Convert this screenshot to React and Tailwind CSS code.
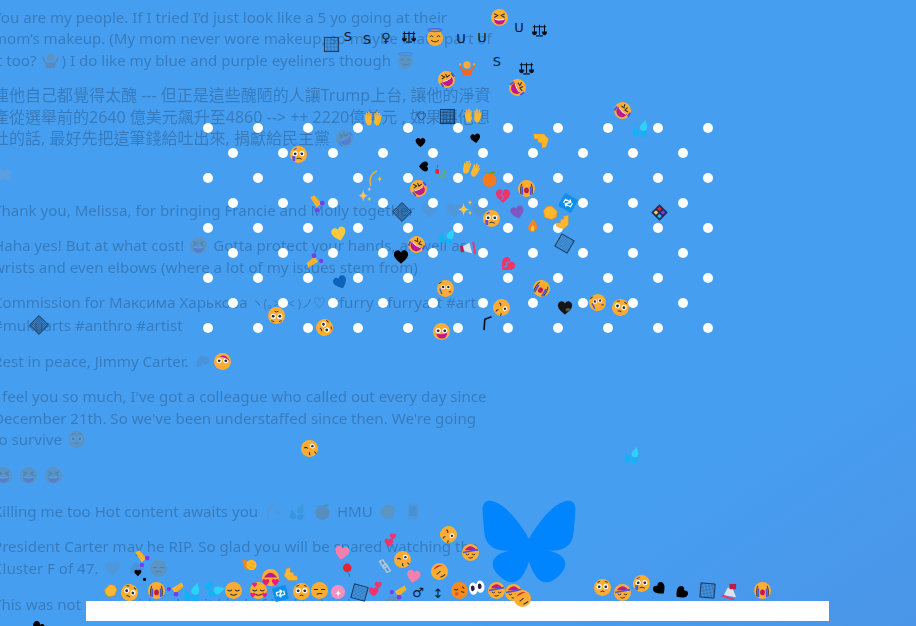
import React from 'react';

const FACE = '#FFAC33';
const DARK = '#292F33';
const HEART = 'M18 33C8 25 2 19 2 12C2 6 7 3 11 3C14 3 16 5 18 8C20 5 22 3 25 3C29 3 34 6 34 12C34 19 28 25 18 33Z';
const STAR = 'M14 4C15 13 18 17 26 18C18 19 15 23 14 32C13 23 10 19 2 18C10 17 13 13 14 4Z';
const DROP = 'M8 0C10 6 15 10 15 15A7 7 0 0 1 1 15C1 10 6 6 8 0Z';

const Base = ({ children }) => (
  <>
    <circle cx="18" cy="18" r="18" fill={FACE} />
    {children}
  </>
);

const BigEyes = () => (
  <>
    <circle cx="11" cy="16" r="5.5" fill="#fff" />
    <circle cx="25" cy="16" r="5.5" fill="#fff" />
    <circle cx="11" cy="16.5" r="3" fill={DARK} />
    <circle cx="25" cy="16.5" r="3" fill={DARK} />
  </>
);

const Closed = () => (
  <g fill="none" stroke={DARK} strokeWidth="2.2" strokeLinecap="round">
    <path d="M6 17Q10 21 14 17" />
    <path d="M22 17Q26 21 30 17" />
    <path d="M12 26Q18 30 24 26" />
  </g>
);

const Grid = ({ dense }) => (
  <>
    <defs>
      <pattern id={dense ? 'gridDense' : 'gridFine'} width="3" height="3" patternUnits="userSpaceOnUse">
        <path d="M0 0H3M0 0V3" stroke="#17375a" strokeWidth={dense ? 1.5 : 0.7} />
      </pattern>
    </defs>
    <rect x="3" y="3" width="30" height="30" fill={`url(#${dense ? 'gridDense' : 'gridFine'})`} stroke="#17375a" strokeWidth="2" />
  </>
);

const Palm = () => (
  <path d="M3 23L1 11Q2 9 3.500 11L4.500 15L4 6Q5.500 4 7 6L8 14L8.500 4Q10 2 11.500 4L11.500 14L13 7Q15 6 15.500 8L15 18L16 24L12 31L6 30Z" />
);

const KINDS = {
  xd: (
    <Base>
      <path d="M7 10L14 14L7 18M29 10L22 14L29 18" fill="none" stroke={DARK} strokeWidth="2.4" />
      <path d="M6 20Q18 23 30 20Q29 33 18 33Q7 33 6 20Z" fill="#BE1A8C" />
      <path d="M7 20Q18 23 29 20L28 23Q18 26 8 23Z" fill="#fff" />
    </Base>
  ),
  rofl: (
    <Base>
      <path d="M7 9L14 13L8 17M16 6L19 13L25 8" fill="none" stroke={DARK} strokeWidth="2.2" />
      <path d="M8 23Q18 21 29 12Q36 26 24 31Q13 34 8 23Z" fill="#BE1A8C" />
      <path d="M6 26L12 34M28 4L34 12" stroke="#4A55E0" strokeWidth="4" />
      <path d="M10 23Q20 21 28 14" stroke="#fff" strokeWidth="2" fill="none" />
    </Base>
  ),
  halo: (
    <>
      <circle cx="18" cy="20" r="16" fill={FACE} />
      <ellipse cx="18" cy="4" rx="14" ry="3" fill="none" stroke="#4A6CE0" strokeWidth="2.6" />
      <g fill="none" stroke={DARK} strokeWidth="2" strokeLinecap="round">
        <path d="M8 17Q11 13 14 17M22 17Q25 13 28 17M11 25Q18 31 25 25" />
      </g>
    </>
  ),
  flushed: (
    <Base>
      <BigEyes />
      <path d="M14 27Q18 24 22 27" fill="none" stroke={DARK} strokeWidth="2" />
      <path d="M7 7L13 5M23 5L29 7" stroke={DARK} strokeWidth="2" />
    </Base>
  ),
  tear: (
    <Base>
      <BigEyes />
      <path d="M14 27Q19 24 25 28" fill="none" stroke={DARK} strokeWidth="2" />
      <path d="M5 21H11V31Q8 33 5 30Z" fill="#4A55E0" />
      <path d="M8 8L14 5" stroke="#4A55E0" strokeWidth="2.4" />
    </Base>
  ),
  wink: (
    <Base>
      <circle cx="24" cy="13" r="5" fill="#fff" />
      <circle cx="24" cy="13" r="2.6" fill={DARK} />
      <path d="M7 17Q11 14 14 18M19 26Q16 30 20 32M28 25Q32 26 32 29" fill="none" stroke={DARK} strokeWidth="2.2" />
    </Base>
  ),
  open: (
    <Base>
      <BigEyes />
      <path d="M7 22Q18 27 30 20Q29 34 18 33Q9 32 7 22Z" fill="#BE1A8C" />
    </Base>
  ),
  wail: (
    <Base>
      <path d="M8 8Q4 16 6 30M28 8Q32 16 30 30" fill="none" stroke={DARK} strokeWidth="2" />
      <path d="M9 14V32M27 14V32" stroke="#4A55E0" strokeWidth="4" />
      <ellipse cx="18" cy="22" rx="5" ry="6" fill="#BE1A4C" />
    </Base>
  ),
  party: (
    <Base>
      <path d="M6 13Q18 -3 30 13Z" fill="#BE1A8C" />
      <path d="M2 18L34 12" stroke="#4A55E0" strokeWidth="3.6" />
      <path d="M8 21Q12 25 15 21M21 21Q25 25 28 21M14 29Q18 31 23 28" fill="none" stroke={DARK} strokeWidth="2" />
    </Base>
  ),
  sleepy: (
    <Base>
      <Closed />
    </Base>
  ),
  cap: (
    <Base>
      <path d="M5 15Q12 1 26 6Q16 6 5 15Z" fill="#BE1A4C" />
      <path d="M12 24Q18 20 20 17M20 30Q26 28 30 24" fill="none" stroke={DARK} strokeWidth="2.2" />
    </Base>
  ),
  unamused: (
    <Base>
      <path d="M6 16H15M21 16H30M12 26Q18 23 24 25" fill="none" stroke={DARK} strokeWidth="2.2" />
    </Base>
  ),
  hearts: (
    <Base>
      <Closed />
      <path d={HEART} fill="#F0187C" transform="translate(4 0) scale(.32)" />
      <path d={HEART} fill="#F0187C" transform="translate(0 22) scale(.32)" />
      <path d={HEART} fill="#F0187C" transform="translate(25 22) scale(.32)" />
    </Base>
  ),
  heartEyes: (
    <Base>
      <path d="M4 18Q18 -2 32 18Z" fill="#BE1A8C" />
      <path d={HEART} fill="#F0187C" transform="translate(0 20) scale(.45)" />
      <path d={HEART} fill="#F0187C" transform="translate(20 20) scale(.45)" />
    </Base>
  ),
  hooded: (
    <Base>
      <BigEyes />
      <path d="M12 8Q24 0 34 18Q24 8 12 8Z" fill="#BE1A8C" />
    </Base>
  ),
  kiss: (
    <>
      <circle cx="18" cy="18" r="18" fill="#F58A1F" />
      <path d="M7 15Q11 19 15 15M21 20L28 22M24 10L28 14" fill="none" stroke={DARK} strokeWidth="2.2" />
      <circle cx="12" cy="25" r="4" fill="#E8562A" />
    </>
  ),
  cry: (
    <Base>
      <circle cx="13" cy="15" r="4.6" fill="#fff" />
      <circle cx="24" cy="15" r="4.6" fill="#fff" />
      <circle cx="13" cy="15" r="2.6" fill={DARK} />
      <circle cx="24" cy="15" r="2.6" fill={DARK} />
      <path d="M25 25Q28 24 30 26" stroke={DARK} strokeWidth="2" fill="none" />
      <path d="M6 18Q9 26 10 30" stroke="#4A55E0" strokeWidth="3" fill="none" />
      <path d="M4 8L10 4" stroke={DARK} strokeWidth="2" />
    </Base>
  ),
  eyes: (
    <>
      <ellipse cx="11" cy="20" rx="9" ry="13" fill="#fff" />
      <ellipse cx="26" cy="17" rx="9" ry="13" fill="#fff" />
      <ellipse cx="10" cy="19" rx="4" ry="6" fill="#2A1B4A" />
      <ellipse cx="25" cy="16" rx="4" ry="6" fill="#2A1B4A" />
    </>
  ),
  black: <path d={HEART} fill="#000" />,
  dark: (
    <>
      <path d={HEART} fill="#161616" />
      <ellipse cx="25" cy="22" rx="6" ry="4" fill="#555" />
    </>
  ),
  pink: <path d={HEART} fill="#F77FAE" />,
  yellow: <path d={HEART} fill="#FFC83D" />,
  blue: <path d={HEART} fill="#0D63B8" />,
  purple: <path d={HEART} fill="#7E57C2" />,
  grey: <path d={HEART} fill="#A9C4DF" />,
  red: (
    <>
      <path d={HEART} fill="#F0346B" />
      <path d="M18 8L13 15L20 20L15 27" fill="none" stroke="#469EF1" strokeWidth="2" />
    </>
  ),
  outline: <path d={HEART} fill="none" stroke="#0f2a48" strokeWidth="2.6" />,
  twoHearts: (
    <>
      <path d={HEART} fill="#F0346B" transform="translate(14 0) scale(.5)" />
      <path d={HEART} fill="#F0346B" transform="translate(0 12) scale(.7)" />
    </>
  ),
  spark: (
    <g fill="#FFC83D">
      <path d={STAR} transform="translate(0 4)" />
      <path d={STAR} transform="translate(22 0) scale(.4)" />
      <path d={STAR} transform="translate(22 22) scale(.4)" />
    </g>
  ),
  drops: (
    <>
      <path d={DROP} fill="#2CD3F9" transform="translate(17 -1) rotate(15 8 12) scale(1.1)" />
      <path d={DROP} fill="#12B2F5" transform="translate(0 13) rotate(-10 8 12) scale(1)" />
      <path d={DROP} fill="#12B2F5" transform="translate(20 21) rotate(60 8 8) scale(.85)" />
    </>
  ),
  hands: (
    <g fill="#FFB72E">
      <Palm />
      <g transform="translate(36 0) scale(-1 1)">
        <Palm />
      </g>
    </g>
  ),
  fist: (
    <path d="M4 16L16 4L28 6L33 16L28 30L14 33L6 26Z" fill="#FFB72E" stroke="#E8930C" strokeWidth="1.5" />
  ),
  point: (
    <path d="M3 4H24L33 14L28 30L20 32V22L12 20V14H5Z" fill="#FFB72E" stroke="#E8930C" strokeWidth="1" />
  ),
  pinch: (
    <>
      <path d="M3 5L12 1L26 18L16 26Z" fill="#FFB72E" />
      <path d="M6 6L18 20M11 3L22 17" stroke="#E8930C" strokeWidth="1.2" />
      <circle cx="28" cy="17" r="5" fill="#7C3AED" />
      <circle cx="17" cy="32" r="4.5" fill="#7C3AED" />
    </>
  ),
  person: (
    <>
      <circle cx="18" cy="11" r="8" fill={FACE} />
      <path d="M6 22H30L27 34H9Z" fill="#F4661C" />
      <path d="M1 11L7 22M35 11L29 22" stroke="#F4661C" strokeWidth="4" />
      <circle cx="2" cy="10" r="2.5" fill={FACE} />
      <circle cx="34" cy="10" r="2.5" fill={FACE} />
    </>
  ),
  peach: (
    <>
      <circle cx="18" cy="21" r="15" fill="#F5791F" />
      <path d="M18 6Q26 0 32 4Q26 10 18 8Z" fill="#5DA52D" />
      <path d="M18 8Q11 3 6 8" fill="none" stroke="#5DA52D" strokeWidth="2" />
    </>
  ),
  fire: (
    <>
      <path d="M19 0Q32 14 30 24A12 12 0 0 1 6 24Q6 16 12 12Q14 8 19 0Z" fill="#F4841E" />
      <path d="M18 16Q25 24 23 28A5 6 0 0 1 13 28Q13 23 18 16Z" fill="#FFC83D" />
    </>
  ),
  rose: (
    <>
      <path d="M4 13Q9 9 12 15V23Q5 26 3 20Z" fill="#E8232E" />
      <path d="M9 2L8 9" stroke="#E8232E" strokeWidth="2" />
      <path d="M14 28Q26 28 24 14Q30 22 26 30Q16 35 10 28" fill="none" stroke="#7CB518" strokeWidth="2" />
    </>
  ),
  comet: (
    <>
      <path d="M23 2Q4 10 10 34" fill="none" stroke="#FFB72E" strokeWidth="2.4" />
      <path d={STAR} fill="#FFB72E" transform="translate(22 10) scale(.5)" />
    </>
  ),
  mega: (
    <>
      <path d="M8 14L22 6L28 28L12 24Z" fill="#DCE3EA" />
      <path d="M6 12L6 26" stroke="#BE1A4C" strokeWidth="6" transform="rotate(-8 6 18)" />
      <path d="M30 4L34 30" stroke="#F0346B" strokeWidth="4" />
    </>
  ),
  megaUp: (
    <>
      <path d="M14 10L24 10L32 30L6 26Z" fill="#DCE3EA" />
      <rect x="18" y="2" width="14" height="11" fill="#BE1A4C" />
      <path d="M2 26L28 36" stroke="#F0346B" strokeWidth="4" />
    </>
  ),
  repost: (
    <>
      <rect x="3" y="3" width="30" height="30" rx="3" fill="#0E90E8" />
      <path d="M10 22V14H22M18 10L22 14L18 18M26 14V22H14M18 26L14 22L18 18" fill="none" stroke="#fff" strokeWidth="2.6" />
    </>
  ),
  sakura: (
    <>
      <circle cx="18" cy="18" r="16" fill="#F58FC0" />
      <path d={STAR} fill="#fff" transform="translate(10 10) scale(.6)" />
    </>
  ),
  balloon: (
    <>
      <circle cx="16" cy="12" r="11" fill="#E8232E" />
      <path d="M16 23Q24 28 22 35" fill="none" stroke="#3730A3" strokeWidth="1.4" />
    </>
  ),
  link: (
    <path d="M6 6L14 2L24 18L16 22ZM14 16L22 12L32 28L24 32Z" fill="none" stroke="#B7C4CE" strokeWidth="3.4" />
  ),
  flameFist: (
    <>
      <path d="M2 5L20 10L10 30Z" fill="#F4841E" />
      <circle cx="22" cy="17" r="11" fill="#FFB72E" />
      <path d="M20 13L27 16M18 20L25 23" stroke="#E8930C" strokeWidth="1.5" />
    </>
  ),
  grid: <Grid />,
  gridDense: <Grid dense />,
  gridBlue: <Grid />,
  gridColor: (
    <>
      <rect x="4" y="4" width="28" height="28" fill="#1d2a55" />
      <rect x="8" y="8" width="8" height="8" fill="#E8232E" />
      <rect x="20" y="8" width="8" height="8" fill="#7C3AED" />
      <rect x="8" y="20" width="8" height="8" fill="#FFC83D" />
      <rect x="20" y="20" width="8" height="8" fill="#27B5EE" />
    </>
  ),
  dots: (
    <>
      <path d={HEART} fill="#000" transform="scale(.6)" />
      <circle cx="29" cy="29" r="4.5" fill="#000" />
    </>
  ),
  bird: (
    <g fill="#7FA8D6">
      <path d="M3 30Q2 8 18 4Q12 14 14 28Z" />
      <circle cx="22" cy="16" r="9" />
    </g>
  ),
  see: (
    <>
      <ellipse cx="11" cy="18" rx="8" ry="12" fill="#fff" />
      <ellipse cx="26" cy="18" rx="8" ry="12" fill="#fff" />
    </>
  ),
  phone: (
    <>
      <rect x="8" y="1" width="22" height="34" rx="3" fill="#B7C4CE" />
      <rect x="11" y="6" width="16" height="22" fill="#6A9ACB" />
    </>
  ),
  scales: (
    <g fill="#06121f" stroke="#06121f">
      <path d="M2 9H34M6 4V24M18 4V29M30 4V24" fill="none" strokeWidth="2.6" />
      <path d="M0 21H12Q11 29 6 29Q1 29 0 21ZM24 21H36Q35 29 30 29Q25 29 24 21Z" />
      <path d="M10 31H26" fill="none" strokeWidth="3" />
    </g>
  ),
  hook: (
    <path d="M12 34L14 8L30 2" fill="none" stroke="#06121f" strokeWidth="4" />
  ),
};

const Emoji = ({ kind, size = 17, className = '', style }) => (
  <svg viewBox="0 0 36 36" width={size} height={size} className={className} style={style}>
    {KINDS[kind]}
  </svg>
);

const Inline = ({ kind }) => <Emoji kind={kind} size={17} className="inline-block align-[-3px] mx-[2px] brightness-[.65]" />;

// kind, center x, center y, size, rotation
const falling = [
  ['xd', 499, 17, 17, 0], ['grid', 331, 44, 17, 0], ['halo', 435, 37, 18, 0], ['person', 467, 68, 16, 0],
  ['scales', 539, 30, 15, 0], ['scales', 409, 37, 14, 0], ['scales', 526, 68, 15, 0],
  ['rofl', 446, 79, 17, 0], ['rofl', 517, 87, 17, 90], ['rofl', 622, 110, 17, 70], ['hands', 373, 119, 18, 0],
  ['outline', 421, 116, 9, 0], ['gridDense', 447, 116, 17, 0], ['hands', 473, 116, 18, 0],
  ['black', 420, 142, 11, 0], ['black', 475, 138, 11, -10], ['black', 423, 166, 11, 90],
  ['tear', 298, 154, 17, 0], ['rose', 441, 171, 15, 0], ['hands', 471, 169, 18, 20], ['peach', 489, 178, 17, 0],
  ['comet', 374, 178, 17, 0], ['spark', 365, 194, 16, 0], ['rofl', 418, 188, 17, 0], ['point', 541, 141, 18, 0],
  ['drops', 640, 128, 17, 0], ['pinch', 317, 203, 17, 0], ['gridDense', 402, 212, 16, 45], ['spark', 465, 207, 17, 0],
  ['tear', 491, 218, 17, 0], ['red', 503, 196, 16, 0], ['wail', 526, 188, 17, 0], ['purple', 517, 212, 15, -15],
  ['fist', 550, 212, 17, 90], ['repost', 568, 203, 18, 30], ['point', 562, 222, 16, 90], ['fire', 532, 225, 13, 0],
  ['gridColor', 659, 212, 15, 45], ['gridBlue', 564, 243, 17, 30], ['yellow', 339, 234, 16, -15],
  ['drops', 447, 236, 16, 15], ['rofl', 416, 244, 17, 60], ['black', 401, 257, 16, 0], ['mega', 467, 248, 17, 0],
  ['pinch', 314, 260, 17, 270], ['red', 507, 265, 16, 45], ['blue', 340, 282, 15, -25], ['cry', 445, 288, 17, 0],
  ['wail', 541, 288, 17, 30], ['wink', 501, 307, 17, 60], ['dark', 565, 308, 16, 0], ['cry', 597, 302, 17, -10],
  ['flushed', 620, 307, 17, 15], ['gridDense', 39, 325, 16, 45], ['flushed', 276, 315, 17, 180],
  ['flushed', 324, 327, 17, 60], ['open', 441, 331, 17, 0], ['hook', 486, 323, 15, 0], ['hooded', 222, 361, 17, 0], ['wink', 309, 448, 17, 0],
  ['drops', 632, 455, 16, 0], ['black', 38, 628, 14, 30],
  ['fist', 110, 590, 15, 0], ['flushed', 129, 592, 17, 20], ['wail', 156, 590, 17, 0], ['pinch', 175, 589, 17, 90],
  ['drops', 192, 592, 18, 0], ['drops', 215, 588, 18, 60], ['sleepy', 233, 590, 17, 0], ['hearts', 258, 590, 17, 0],
  ['repost', 280, 593, 17, -15], ['flushed', 301, 591, 17, 0], ['unamused', 319, 590, 17, 0], ['sakura', 338, 592, 16, 0],
  ['gridBlue', 359, 592, 17, 15], ['twoHearts', 376, 589, 16, 0], ['pinch', 398, 592, 17, 90], ['kiss', 459, 590, 17, 0],
  ['eyes', 476, 587, 17, -5], ['party', 496, 590, 17, 0], ['party', 513, 592, 17, 0], ['cap', 522, 598, 17, 0],
  ['pinch', 142, 558, 17, 0], ['dots', 140, 575, 13, 0], ['flameFist', 249, 565, 17, 0], ['heartEyes', 270, 577, 17, 0],
  ['point', 291, 574, 16, 180], ['pink', 342, 553, 16, 10], ['balloon', 348, 570, 14, 0], ['twoHearts', 391, 540, 14, 0],
  ['link', 384, 566, 15, 0], ['wink', 402, 559, 17, 0], ['pink', 413, 576, 15, 10], ['wink', 448, 534, 17, 60],
  ['party', 470, 552, 17, 0], ['cap', 439, 571, 17, 0], ['flushed', 602, 587, 17, 0], ['party', 622, 592, 17, 0],
  ['tear', 641, 583, 17, 0], ['black', 660, 589, 14, -40], ['black', 681, 593, 14, 50], ['gridBlue', 707, 590, 17, 5],
  ['megaUp', 729, 591, 17, 0], ['wail', 762, 590, 17, 0],
];

// loose symbol glyphs
const glyphs = [
  ['U', 519, 27], ['S', 348, 36], ['S', 367, 39], ['♀', 386, 37], ['U', 461, 38],
  ['U', 482, 37], ['S', 497, 61], ['♂', 418, 592], ['↕', 438, 593],
];

const paragraphs = [
  <>You are my people. If I tried I’d just look like a 5 yo going at their<br />mom’s makeup. (My mom never wore makeup, so maybe that’s part of<br />it too? <Inline kind="person" />) I do like my blue and purple eyeliners though <Inline kind="halo" /></>,
  <span className="text-[16px]">連他自己都覺得太醜 --- 但正是這些醜陋的人讓Trump上台, 讓他的淨資<br />產從選舉前的2640 億美元飆升至4860 --&gt; ++ 2220億美元 , 如果讓他想<br />吐的話, 最好先把這筆錢給吐出來, 捐獻給民主黨 <Inline kind="rofl" /></span>,
  <><Inline kind="see" /></>,
  <>Thank you, Melissa, for bringing Francie and Molly together <Inline kind="grey" /> <Inline kind="grey" /> <Inline kind="grey" /></>,
  <>Haha yes! But at what cost! <Inline kind="xd" /> Gotta protect your hands, as well as<br />wrists and even elbows (where a lot of my issues stem from)</>,
  <>Commission for Максима Харькова <span className="text-[12px]">ヽ(｡&gt;ᴗ&lt; )ノ♡</span> #furry #furryart #art<br />#mukuarts #anthro #artist</>,
  <>Rest in peace, Jimmy Carter. <Inline kind="bird" /></>,
  <>I feel you so much, I've got a colleague who called out every day since<br />December 21th. So we've been understaffed since then. We're going<br />to survive <Inline kind="flushed" /></>,
  <><Inline kind="xd" /> <Inline kind="xd" /> <Inline kind="xd" /></>,
  <>Killing me too Hot content awaits you <Inline kind="comet" /> <Inline kind="drops" /> <Inline kind="peach" /> HMU <Inline kind="fist" /> <Inline kind="phone" /></>,
  <>President Carter may he RIP. So glad you will be spared watching the<br />Cluster F of 47. <Inline kind="grey" /> <Inline kind="bird" /><Inline kind="unamused" /></>,
  <>This was not a good idea, but it kind of had to be done <Inline kind="xd" /></>,
];

const Dots = ({ count }) => (
  <div className="flex gap-[40px]">
    {Array.from({ length: count }).map((_, i) => (
      <span key={i} className="w-[10px] h-[10px] rounded-full bg-white" />
    ))}
  </div>
);

export default function App() {
  return (
    <div className="relative w-[916px] h-[626px] overflow-hidden bg-linear-to-br from-[#469ef1] via-[#469ef1] via-75% to-[#4a95e8] font-['Noto_Sans','Noto_Sans_CJK_TC',sans-serif]">
      {/* feed behind the overlay */}
      <div className="flex flex-col gap-[14.2px] pt-[6.500px] -ml-[7px] w-[520px] text-[15.1px] leading-[21.5px] text-black opacity-[.22] whitespace-nowrap">
        {paragraphs.map((p, i) => (
          <p key={i}>{p}</p>
        ))}
      </div>

      {/* loading overlay */}
      <div className="absolute inset-0 flex flex-col items-center pt-[123px]">
        <div className="flex flex-col items-center gap-[15px]">
          {[11, 10, 11, 10, 11, 10, 11, 10, 11].map((n, i) => (
            <Dots key={i} count={n} />
          ))}
        </div>
        <svg viewBox="0 0 600 530" className="mt-[166px] ml-[141px] w-[96px] h-[85px] fill-[#0085ff]">
          <path d="m135.72 44.03c66.496 49.921 138.02 151.14 164.28 205.46 26.262-54.316 97.782-155.54 164.28-205.46 47.98-36.021 125.72-63.892 125.72 24.795 0 17.712-10.155 148.79-16.111 170.07-20.703 73.984-96.144 92.854-163.25 81.433 117.3 19.964 147.14 86.092 82.697 152.22-122.39 125.59-175.91-31.511-189.63-71.766-2.514-7.3797-3.6904-10.832-3.7077-7.8964-0.0174-2.9357-1.1937 0.51669-3.7077 7.8964-13.714 40.255-67.233 197.36-189.63 71.766-64.444-66.128-34.605-132.26 82.697-152.22-67.108 11.421-142.55-7.4491-163.25-81.433-5.9562-21.282-16.111-152.36-16.111-170.07 0-88.687 77.742-60.816 125.72-24.795z" />
        </svg>
        <div className="mt-[17px] mr-[1px] w-[743px] h-[20px] bg-white" />
      </div>

      {/* emoji falling over everything */}
      {glyphs.map(([t, x, y], i) => (
        <span
          key={i}
          className="absolute -translate-x-1/2 -translate-y-1/2 text-[13px] leading-none text-[#0b1a2c] font-['DejaVu_Sans',sans-serif]"
          style={{ left: x, top: y }}
        >
          {t}
        </span>
      ))}
      {falling.map(([kind, x, y, size, rot], i) => (
        <Emoji
          key={i}
          kind={kind}
          size={size}
          className="absolute"
          style={{ left: x - size / 2, top: y - size / 2, transform: `rotate(${rot}deg)` }}
        />
      ))}
    </div>
  );
}
